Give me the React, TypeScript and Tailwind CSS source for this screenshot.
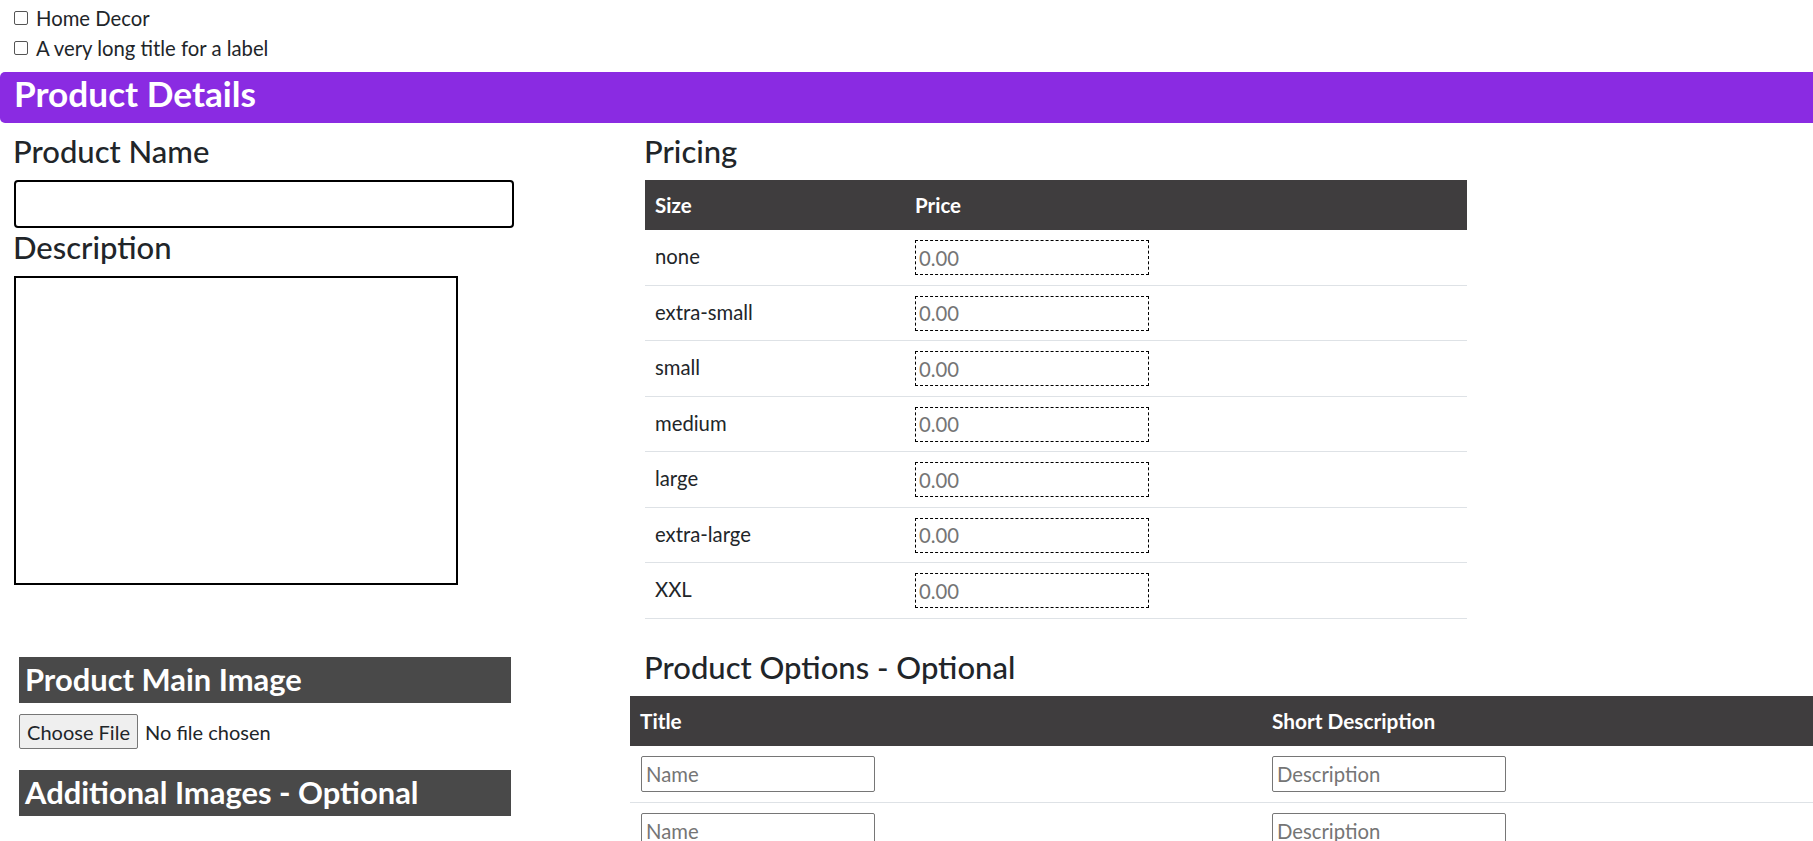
import React from 'react'

const categories = ['Home Decor', 'A very long title for a label']

const sizes = [
  { label: 'none', h: 'h-[56px]' },
  { label: 'extra-small', h: 'h-[55px]' },
  { label: 'small', h: 'h-[56px]' },
  { label: 'medium', h: 'h-[55px]' },
  { label: 'large', h: 'h-[56px]' },
  { label: 'extra-large', h: 'h-[55px]' },
  { label: 'XXL', h: 'h-[56px]' },
]

const SectionHeading: React.FC<{ children: React.ReactNode; className?: string }> = ({ children, className }) => (
  <h3 className={`text-[31px] leading-[37px] font-medium ${className ?? ''}`}>{children}</h3>
)

const DarkBar: React.FC<{ children: React.ReactNode; className?: string }> = ({ children, className }) => (
  <div
    className={`ml-[19px] h-[46px] w-[492px] bg-[#494949] pl-[6px] text-[30.9px] leading-[46px] font-bold text-white ${className ?? ''}`}
  >
    {children}
  </div>
)

const PricingTable = () => (
  <div className="w-[822px]">
    <div className="flex h-[50px] items-center bg-[#3f3d3e] text-[20.5px] font-bold text-white">
      <div className="w-[260px] pl-[10px]">Size</div>
      <div className="pl-[10px]">Price</div>
    </div>
    {sizes.map((s) => (
      <div key={s.label} className={`flex items-center border-b border-[#dee2e6] ${s.h}`}>
        <div className="w-[260px] pb-[3px] pl-[10px]">{s.label}</div>
        <div className="pl-[10px]">
          <input
            type="text"
            placeholder="0.00"
            className="h-[35px] w-[234px] border border-dashed border-black pl-[3px] outline-none placeholder:text-[#757575]"
          />
        </div>
      </div>
    ))}
  </div>
)

const OptionsTable = () => (
  <div className="w-full">
    <div className="flex h-[50px] items-center bg-[#3f3d3e] text-[20.8px] font-bold text-white">
      <div className="w-[631px] pl-[10px]">Title</div>
      <div className="pl-[11px]">Short Description</div>
    </div>
    {[0, 1, 2].map((i) => (
      <div key={i} className="flex h-[57px] items-center border-b border-[#dee2e6]">
        <div className="w-[631px] pl-[11px]">
          <input
            type="text"
            placeholder="Name"
            className="h-[36px] w-[234px] rounded-[2px] border border-[#767676] pl-[4px] outline-none placeholder:text-[#757575]"
          />
        </div>
        <div className="pl-[11px]">
          <input
            type="text"
            placeholder="Description"
            className="h-[36px] w-[234px] rounded-[2px] border border-[#767676] pl-[4px] outline-none placeholder:text-[#757575]"
          />
        </div>
      </div>
    ))}
  </div>
)

export default function App() {
  return (
    <div className="min-h-screen w-full overflow-hidden bg-white font-['Lato',sans-serif] text-[20.3px] leading-[28px] text-[#212529]">
      {/* category checkboxes */}
      <div className="pt-[3px]">
        {categories.map((c) => (
          <label key={c} className="flex h-[30px] items-center">
            <input
              type="checkbox"
              className="ml-[14px] h-[14px] w-[14px] appearance-none rounded-[2px] border border-[#555] bg-white"
            />
            <span className="ml-[8px]">{c}</span>
          </label>
        ))}
      </div>

      <div className="mt-[9px] h-[51px] rounded-l-[5px] bg-[#8a2be2] pl-[14px] text-[35.2px] leading-[42px] font-bold text-white">
        Product Details
      </div>

      <div className="flex">
        {/* left column */}
        <div className="w-[630px] shrink-0">
          <SectionHeading className="mt-[10px] pl-[13px]">Product Name</SectionHeading>
          <input
            type="text"
            className="mt-[10px] ml-[14px] h-[48px] w-[500px] rounded-[4px] border-2 border-black px-2 outline-none"
          />
          <SectionHeading className="mt-[1px] pl-[13px]">Description</SectionHeading>
          <textarea className="mt-[10px] ml-[14px] block h-[309px] w-[444px] resize-none border-2 border-black outline-none" />

          <DarkBar className="mt-[72px]">Product Main Image</DarkBar>
          <div className="mt-[11px] ml-[19px] flex items-center">
            <button className="h-[35px] w-[119px] rounded-[2px] border border-[#767676] bg-[#efefef] text-[20px]">
              Choose File
            </button>
            <span className="ml-[7px] text-[20px]">No file chosen</span>
          </div>
          <DarkBar className="mt-[21px]">Additional Images - Optional</DarkBar>
        </div>

        {/* right column */}
        <div className="min-w-0 flex-1">
          <div className="pl-[15px]">
            <SectionHeading className="mt-[10px] -ml-[1px]">Pricing</SectionHeading>
            <div className="mt-[10px]">
              <PricingTable />
            </div>
          </div>
          <SectionHeading className="mt-[30px] pl-[14px]">Product Options - Optional</SectionHeading>
          <div className="mt-[10px]">
            <OptionsTable />
          </div>
        </div>
      </div>
    </div>
  )
}
